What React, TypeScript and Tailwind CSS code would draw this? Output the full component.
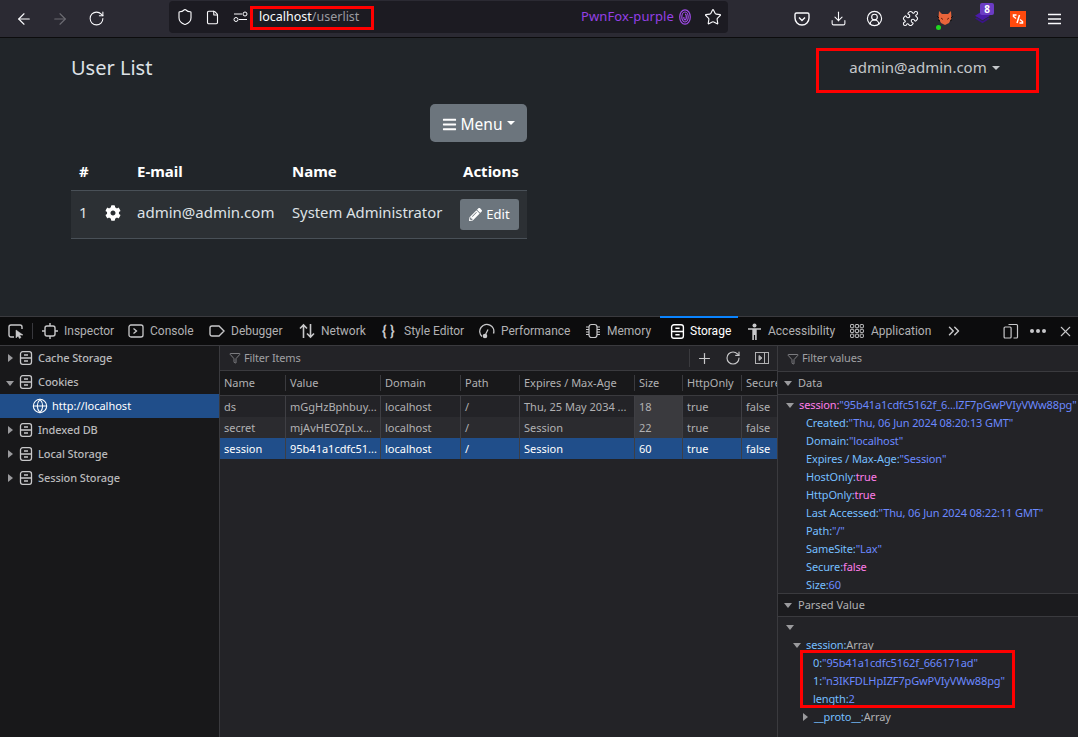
import React from 'react';
import {
  ArrowLeft, ArrowRight, RotateCw, Shield, File, Star, Download, CircleUserRound, Puzzle,
  Plus, X, ChevronsRight, Globe, Filter,
} from 'lucide-react';
import { FaBars, FaCog, FaPencilAlt } from 'react-icons/fa';

const DEVTOOLS_TABS = [
  { label: 'Inspector', w: 'w-[86px]', icon: <InspectorIcon /> },
  { label: 'Console', w: 'w-[81px]', icon: <ConsoleIcon /> },
  { label: 'Debugger', w: 'w-[90px]', icon: <DebuggerIcon /> },
  { label: 'Network', w: 'w-[83px]', icon: <NetworkIcon /> },
  { label: 'Style Editor', w: 'w-[97px]', icon: <span className="w-[16px] text-[14px] leading-none font-bold whitespace-nowrap text-[#c8c8ca]">{'{ }'}</span> },
  { label: 'Performance', w: 'w-[106px]', icon: <PerfIcon /> },
];

const COLS = ['w-[65px]', 'w-[95px]', 'w-[80px]', 'w-[59px]', 'w-[115px]', 'w-[48px]', 'w-[59px]', 'flex-1'];
const HEAD = ['Name', 'Value', 'Domain', 'Path', 'Expires / Max-Age', 'Size', 'HttpOnly', 'Secure'];
const ROWS = [
  { cells: ['ds', 'mGgHzBphbuy...', 'localhost', '/', 'Thu, 25 May 2034 ...', '18', 'true', 'false'], cls: 'bg-[#232327] text-[#b1b1b3]' },
  { cells: ['secret', 'mjAvHEOZpLx...', 'localhost', '/', 'Session', '22', 'true', 'false'], cls: 'bg-[#2b2b2f] text-[#b1b1b3]' },
  { cells: ['session', '95b41a1cdfc51...', 'localhost', '/', 'Session', '60', 'true', 'false'], cls: 'bg-[#204e8a] text-white' },
];

function InspectorIcon() {
  return (
    <svg width="16" height="16" viewBox="0 0 16 16" fill="none" stroke="#c8c8ca" strokeWidth="1.4">
      <rect x="3" y="3" width="10" height="10" rx="2" />
      <path d="M8 0v3M8 13v3M0 8h3M13 8h3" />
    </svg>
  );
}

function ConsoleIcon() {
  return (
    <svg width="16" height="16" viewBox="0 0 16 16" fill="none" stroke="#c8c8ca" strokeWidth="1.3">
      <rect x="1" y="2" width="14" height="12" rx="2" />
      <path d="M5.500 5.500 8.500 8l-3 2.500" />
    </svg>
  );
}

function DebuggerIcon() {
  return (
    <svg width="16" height="16" viewBox="0 0 16 16" fill="none" stroke="#c8c8ca" strokeWidth="1.4">
      <path d="M1 5a2 2 0 0 1 2-2h7l5 5-5 5H3a2 2 0 0 1-2-2z" />
    </svg>
  );
}

function NetworkIcon() {
  return (
    <svg width="16" height="16" viewBox="0 0 16 16" fill="none" stroke="#c8c8ca" strokeWidth="1.6">
      <path d="M4.500 15V2M1 5.500 4.500 2 8 5.500M11.500 1v13M8 10.500l3.500 3.500 3.500-3.500" />
    </svg>
  );
}

function PerfIcon() {
  return (
    <svg width="16" height="16" viewBox="0 0 16 16" fill="none" stroke="#c8c8ca" strokeWidth="1.4">
      <path d="M3 13.500A7 7 0 1 1 14.500 10.500" />
      <path d="M5.500 13.500 9 6.500" strokeWidth="1.2" />
      <circle cx="6" cy="13" r="1.600" fill="#c8c8ca" />
    </svg>
  );
}

function MemoryIcon() {
  return (
    <svg width="16" height="16" viewBox="0 0 16 16" fill="none" stroke="#c8c8ca" strokeWidth="1.2">
      <rect x="4" y="1.500" width="8" height="13" rx="2.500" />
      <path d="M1 4h3M1 6.500h3M1 9h3M1 11.500h3M12 4h3M12 6.500h3M12 9h3M12 11.500h3" />
    </svg>
  );
}

function StorageIcon({ color = '#c8c8ca', size = 14 }: { color?: string; size?: number }) {
  return (
    <svg width={size} height={size} viewBox="0 0 14 14" fill="none" stroke={color} strokeWidth="1.3">
      <rect x="1.500" y="0.700" width="11" height="12.600" rx="2.200" />
      <path d="M1.500 7h11M5 4h4M5 10h4" />
    </svg>
  );
}

function AccessibilityIcon() {
  return (
    <svg width="15" height="17" viewBox="0 0 14 17" fill="#c8c8ca">
      <circle cx="7" cy="2.500" r="2" />
      <path d="M0.500 5.200h13v1.600H9.200V17H7.600v-5H6.400v5H4.800V6.800H0.500z" />
    </svg>
  );
}

function AppIcon() {
  return (
    <svg width="15" height="15" viewBox="0 0 14 14" fill="none" stroke="#c8c8ca" strokeWidth="0.9">
      {[1.5, 6, 10.5].map((y) =>
        [0.5, 5, 9.5].map((x) => <rect key={`${x}-${y}`} x={x} y={y - 1} width="3" height="3" rx="0.5" />),
      )}
    </svg>
  );
}

function FingerprintIcon() {
  return (
    <svg width="12" height="16" viewBox="0 0 12 16" fill="none" stroke="#a04ce8" strokeWidth="1.2" className="ml-[5px]">
      <ellipse cx="6" cy="8" rx="5.300" ry="7.200" />
      <ellipse cx="6" cy="8" rx="3.200" ry="5" />
      <path d="M6 5.200c1.200 0 1.300 1.500 1.300 2.800s-.3 2.800-1.300 2.800S4.800 9 4.800 8" />
    </svg>
  );
}

function FilterField({ label }: { label: string }) {
  return (
    <div className="flex items-center gap-[3px] pl-[9px] text-[11px] tracking-[-0.15px] text-[#a0a0a3]">
      <Filter size={12} strokeWidth={1.5} className="text-[#9a9a9d]" />
      {label}
    </div>
  );
}

function TreeItem({ label, open }: { label: string; open?: boolean }) {
  return (
    <div className="flex h-[24px] items-center text-[11px] font-medium tracking-[-0.1px] text-[#b9b9bb]">
      <div className="flex w-[19px] justify-center pl-[1px]">
        {open ? (
          <div className="mt-[2px] h-0 w-0 border-x-[4px] border-t-[5px] border-x-transparent border-t-[#9a9a9d]" />
        ) : (
          <div className="h-0 w-0 border-y-[4px] border-l-[5px] border-y-transparent border-l-[#9a9a9d]" />
        )}
      </div>
      <StorageIcon />
      <span className="ml-[5px]">{label}</span>
    </div>
  );
}

function Prop({ name, value, pink, indent = 'pl-[28px]', nameCls = 'text-[#75bfff]' }: {
  name: string;
  value: string;
  pink?: boolean;
  indent?: string;
  nameCls?: string;
}) {
  return (
    <div className={`flex h-[18px] items-center whitespace-nowrap ${indent}`}>
      <span className={nameCls}>{name}:</span>
      <span className={pink ? 'text-[#ff7de9]' : 'text-[#6b89ff]'}>{value}</span>
    </div>
  );
}

function SectionHeader({ label }: { label: string }) {
  return (
    <div className="flex h-[24px] items-center border-y border-[#3a3a3e] bg-[#1b1b1e] text-[11px] text-[#b1b1b3]">
      <div className="mx-[6px] h-0 w-0 border-x-[4px] border-t-[5px] border-x-transparent border-t-[#9a9a9d]" />
      {label}
    </div>
  );
}

function BrowserBar() {
  return (
    <div className="flex h-[38px] items-start border-b border-[#0c0c0d] bg-[#2b2a33] text-[#fbfbfe]">
      <div className="flex h-[37px] w-[164px] items-center gap-[18px] pl-[15px]">
        <ArrowLeft size={18} strokeWidth={1.5} />
        <ArrowRight size={18} strokeWidth={1.5} className="text-[#6c6b72]" />
        <RotateCw size={17} strokeWidth={1.5} className="ml-[1px]" />
      </div>
      <div className="relative mt-[1px] ml-[5px] flex h-[32px] w-[559px] items-center rounded-[4px] bg-[#1c1b22] pl-[7px]">
        <Shield size={18} strokeWidth={1.5} />
        <File size={15} strokeWidth={1.8} className="ml-[11px]" />
        <svg width="15" height="12" viewBox="0 0 15 12" fill="none" stroke="#fbfbfe" strokeWidth="1" className="ml-[13px]">
          <circle cx="12" cy="3" r="2" />
          <circle cx="3" cy="8.500" r="2" />
          <path d="M1 3h8M6 8.500h8" />
        </svg>
        <span className="ml-[11px] text-[12.5px]">localhost<span className="text-[#9a9aa0]">/userlist</span></span>
        <span className="ml-auto text-[13px] tracking-[0.1px] text-[#9540e6]">PwnFox-purple</span>
        <FingerprintIcon />
        <Star size={18} strokeWidth={1.5} className="mr-[6px] ml-[13px]" />
      </div>
      <div className="flex h-[37px] flex-1 items-center pl-[66px]">
        <svg width="16" height="16" viewBox="0 0 16 16" fill="none" stroke="#fbfbfe" strokeWidth="1.4">
          <path d="M2.500 2h11A1.500 1.500 0 0 1 15 3.500V7a7 7 0 0 1-14 0V3.500A1.500 1.500 0 0 1 2.500 2z" />
          <path d="m5 6.500 3 3 3-3" />
        </svg>
        <Download size={17} strokeWidth={1.5} className="ml-[20px]" />
        <CircleUserRound size={17} strokeWidth={1.6} className="ml-[19px]" />
        <Puzzle size={17} strokeWidth={1.5} className="ml-[19px]" />
        <div className="relative ml-[18px] h-[16px] w-[16px]">
          <svg width="16" height="16" viewBox="0 0 16 16">
            <path d="M2 0l3 3h6l3-3 .5 7L12 12l-4 2-4-2-2.500-5z" fill="#e8643a" />
            <path d="M0 5l2 2M16 5l-2 2M1 9l2 1M15 9l-2 1" stroke="#111" strokeWidth="1" />
            <path d="M4 7l2 1.500M12 7l-2 1.500" stroke="#6b2510" strokeWidth="1" />
          </svg>
          <div className="absolute bottom-[-3px] left-[-1px] h-[5px] w-[5px] rounded-full bg-[#1fd61f]" />
        </div>
        <div className="relative ml-[21px] h-[18px] w-[18px]">
          <svg width="17" height="15" viewBox="0 0 18 16">
            <path d="M9 1 17 6l-8 5-8-5z" fill="#4a1aa8" />
            <path d="m1 9 8 5 8-5-2-1-6 4-6-4z" fill="#3a1488" />
          </svg>
          <div className="absolute top-[-7px] left-[6px] w-[14px] rounded-[2px] bg-[#6b3cc4] text-center text-[10px] leading-[12px] font-bold text-white">8</div>
        </div>
        <svg width="16" height="16" viewBox="0 0 16 16" className="ml-[18px]" fill="none" stroke="#fff" strokeWidth="1.5">
          <rect width="16" height="16" fill="#ff4a0d" stroke="none" />
          <path d="M6.500 4H3.500v1.500L6 7.500M9.500 4 7 12M9.500 12h3v-1.500L10 8.500" />
        </svg>
        <svg width="13" height="12" viewBox="0 0 13 12" stroke="#fbfbfe" strokeWidth="1.3" className="ml-[22px]">
          <path d="M0 1.500h13M0 6h13M0 10.500h13" />
        </svg>
      </div>
    </div>
  );
}

function PageContent() {
  return (
    <div className="relative h-[278px] bg-[#212529] pl-[71px] text-[#dee2e6]">
      <div className="pt-[17px] text-[20px] leading-[26px]">User List</div>
      <div className="absolute top-[10px] left-[816px] flex h-[45px] w-[223px] items-center justify-center border-[3px] border-[#f00] pr-[6px] pb-[6px] text-[15px] text-[#c5c8cb]">
        admin@admin.com
        <span className="mt-[1px] ml-[5px] h-0 w-0 border-x-[4px] border-t-[4px] border-x-transparent border-t-[#c5c8cb]" />
      </div>
      <div className="w-[456px]">
        <div className="mt-[23px] flex justify-end">
          <div className="flex h-[38px] w-[97px] items-center justify-center rounded-[5px] bg-[#6c757d] pt-[3px] text-[15.5px] text-white">
            <FaBars size={15} className="mr-[4px]" />
            Menu
            <span className="mb-[3px] ml-[5px] h-0 w-0 border-x-[4.500px] border-t-[4.500px] border-x-transparent border-t-white" />
          </div>
        </div>
        <div className="mt-[10px] flex h-[39px] items-center border-b border-[#495057] text-[15px] font-bold text-white">
          <div className="w-[66px] pl-[8px]">#</div>
          <div className="w-[155px]">E-mail</div>
          <div className="w-[171px]">Name</div>
          <div>Actions</div>
        </div>
        <div className="flex h-[48px] items-center border-b border-[#495057] bg-[#2c3034] text-[15px]">
          <div className="w-[34px] pb-[4px] pl-[8px]">1</div>
          <div className="w-[32px] pb-[4px]"><FaCog size={16} className="text-white" /></div>
          <div className="w-[155px] pb-[4px]">admin@admin.com</div>
          <div className="w-[169px] pb-[4px] text-[14.8px] whitespace-nowrap">System Administrator</div>
          <div className="-ml-[1px] flex h-[31px] w-[59px] items-center justify-center rounded-[3px] bg-[#6c757d] text-[13px] text-white">
            <FaPencilAlt size={13} className="mr-[4px]" />
            Edit
          </div>
        </div>
      </div>
    </div>
  );
}

function DevToolsTabs() {
  return (
    <div className="flex h-[29px] items-center border-t border-[#3a3a3e] bg-[#0c0c0d] font-['Roboto',sans-serif] text-[12px] text-[#b1b1b3]">
      <div className="flex w-[33px] items-center justify-center border-r border-[#38383d] pl-[1px]">
        <svg width="17" height="16" viewBox="0 0 17 16" fill="none" stroke="#c8c8ca" strokeWidth="1.4">
          <path d="M6 14H3a2 2 0 0 1-2-2V4a2 2 0 0 1 2-2h9a2 2 0 0 1 2 2v2" />
          <path d="M8 7v8l2-2 1.500 2.500 1.500-1-1.500-2.500H15z" fill="#c8c8ca" strokeWidth="0.5" />
        </svg>
      </div>
      <div className="ml-[9px] flex items-center">
        {DEVTOOLS_TABS.map((tab) => (
          <div key={tab.label} className={`flex items-center gap-[6px] whitespace-nowrap ${tab.w}`}>
            {tab.icon}
            {tab.label}
          </div>
        ))}
        <div className="flex w-[75px] items-center gap-[6px]"><MemoryIcon />Memory</div>
      </div>
      <div className="relative flex h-full w-[78px] items-center gap-[5px] pl-[10px] text-white">
        <div className="absolute top-[-1px] left-0 h-[2px] w-full bg-[#0a84ff]" />
        <StorageIcon color="#ffffff" size={15} />
        Storage
      </div>
      <div className="flex w-[103px] items-center gap-[6px] pl-[9px]"><AccessibilityIcon />Accessibility</div>
      <div className="flex w-[106px] items-center gap-[6px] pl-[9px]"><AppIcon />Application</div>
      <ChevronsRight size={18} strokeWidth={2} className="-ml-[2px] text-[#c8c8ca]" />
      <div className="ml-auto flex items-center gap-[11px] pr-[4px] text-[#c8c8ca]">
        <svg width="16" height="16" viewBox="0 0 15 16" fill="none" stroke="#c8c8ca" strokeWidth="1.200">
          <rect x="0.600" y="4" width="7" height="11" rx="1" />
          <path d="M5 1.500h8a1 1 0 0 1 1 1V14a1 1 0 0 1-1 1h-3" />
        </svg>
        <div className="flex gap-[2px]">
          <div className="h-[4px] w-[4px] rounded-full bg-[#c8c8ca]" />
          <div className="h-[4px] w-[4px] rounded-full bg-[#c8c8ca]" />
          <div className="h-[4px] w-[4px] rounded-full bg-[#c8c8ca]" />
        </div>
        <X size={17} strokeWidth={1.5} />
      </div>
    </div>
  );
}

function Sidebar() {
  return (
    <div className="h-full w-[220px] shrink-0 border-r border-[#3a3a3e] bg-[#18181a]">
      <TreeItem label="Cache Storage" />
      <TreeItem label="Cookies" open />
      <div className="flex h-[24px] items-center bg-[#204e8a] pl-[32px] text-[11px] text-white">
        <Globe size={16} strokeWidth={1.6} />
        <span className="ml-[4px]">http://localhost</span>
      </div>
      <TreeItem label="Indexed DB" />
      <TreeItem label="Local Storage" />
      <TreeItem label="Session Storage" />
    </div>
  );
}

function CookieTable() {
  return (
    <div className="flex h-full w-[558px] shrink-0 flex-col border-r border-[#3a3a3e] bg-[#232327]">
      <div className="flex h-[25px] items-center border-b border-[#3a3a3e]">
        <FilterField label="Filter Items" />
        <div className="ml-auto flex h-[18px] w-[88px] items-center border-l border-[#3a3a3e] pl-[6px] text-[#c8c8ca]">
          <Plus size={17} strokeWidth={1.7} />
          <RotateCw size={16} strokeWidth={1.7} className="ml-[12px]" />
          <svg width="14" height="12" viewBox="0 0 14 12" fill="none" stroke="#b1b1b3" className="ml-[14px]">
            <rect x="0.500" y="0.500" width="13" height="11" />
            <path d="M9.500 1v10" />
            <path d="m4 3.500 3 2.500-3 2.500z" fill="#b1b1b3" />
          </svg>
        </div>
      </div>
      <div className="flex h-[25px] items-center border-b border-[#3a3a3e] bg-[#18181a] text-[11px] text-[#b1b1b3]">
        {HEAD.map((h, i) => (
          <div key={h} className={`overflow-hidden border-l border-[#3a3a3e] pl-[4px] whitespace-nowrap first:border-l-0 ${COLS[i]}`}>{h}</div>
        ))}
      </div>
      {ROWS.map((row) => (
        <div key={row.cells[0]} className={`flex h-[21px] items-center text-[11px] ${row.cls}`}>
          {row.cells.map((c, i) => (
            <div
              key={i}
              className={`flex h-full items-center overflow-hidden border-l border-[#3f3f44] pt-[1px] pl-[4px] whitespace-nowrap first:border-l-0 ${COLS[i]} ${i === 5 && row.cells[0] !== 'session' ? 'bg-[#3a3a3e]' : ''}`}
            >
              {c}
            </div>
          ))}
        </div>
      ))}
    </div>
  );
}

function DetailsPanel() {
  return (
    <div className="h-full min-w-0 flex-1 overflow-hidden bg-[#232327]">
      <div className="flex h-[25px] items-center"><FilterField label="Filter values" /></div>
      <SectionHeader label="Data" />
      <div className="h-[198px] overflow-hidden pt-[1px] text-[11px] tracking-[-0.12px]">
        <div className="flex h-[18px] items-center whitespace-nowrap">
          <div className="mr-[5px] ml-[8px] h-0 w-0 border-x-[4px] border-t-[5px] border-x-transparent border-t-[#9a9a9d]" />
          <span className="text-[#ff7de9]">session:</span>
          <span className="text-[#6b89ff]">"95b41a1cdfc5162f_6...lZF7pGwPVIyVWw88pg"</span>
        </div>
        <Prop name="Created" value={'"Thu, 06 Jun 2024 08:20:13 GMT"'} />
        <Prop name="Domain" value={'"localhost"'} />
        <Prop name="Expires / Max-Age" value={'"Session"'} />
        <Prop name="HostOnly" value="true" pink />
        <Prop name="HttpOnly" value="true" pink />
        <Prop name="Last Accessed" value={'"Thu, 06 Jun 2024 08:22:11 GMT"'} />
        <Prop name="Path" value={'"/"'} />
        <Prop name="SameSite" value={'"Lax"'} />
        <Prop name="Secure" value="false" pink />
        <Prop name="Size" value="60" />
      </div>
      <SectionHeader label="Parsed Value" />
      <div className="relative pt-[1px] text-[11px] tracking-[-0.12px]">
        <div className="flex h-[18px] items-center pl-[8px]">
          <div className="h-0 w-0 border-x-[4px] border-t-[5px] border-x-transparent border-t-[#9a9a9d]" />
        </div>
        <div className="flex h-[18px] items-center">
          <div className="mr-[5px] ml-[15px] h-0 w-0 border-x-[4px] border-t-[5px] border-x-transparent border-t-[#9a9a9d]" />
          <span className="text-[#75bfff]">session:</span>
          <span className="text-[#b1b1b3]">Array</span>
        </div>
        <Prop indent="pl-[35px]" name="0" value={'"95b41a1cdfc5162f_666171ad"'} />
        <Prop indent="pl-[35px]" name="1" value={'"n3IKFDLHpIZF7pGwPVIyVWw88pg"'} />
        <Prop indent="pl-[35px]" name="length" value="2" />
        <div className="flex h-[18px] items-center">
          <div className="mr-[6px] ml-[25px] h-0 w-0 border-y-[4px] border-l-[5px] border-y-transparent border-l-[#9a9a9d]" />
          <span className="text-[#75bfff]">__proto__:</span>
          <span className="text-[#b1b1b3]">Array</span>
        </div>
        <div className="absolute top-[33px] left-[22px] h-[58px] w-[215px] border-[3px] border-[#f00]" />
      </div>
    </div>
  );
}

export default function App() {
  return (
    <div className="relative h-[737px] w-[1078px] overflow-hidden bg-[#232327] font-['Noto_Sans',sans-serif]">
      <BrowserBar />
      <PageContent />
      <DevToolsTabs />
      <div className="flex h-[392px] border-t border-[#3a3a3e]">
        <Sidebar />
        <CookieTable />
        <DetailsPanel />
      </div>
      <div className="absolute top-[6px] left-[250px] h-[24px] w-[124px] border-[3px] border-[#f00]" />
    </div>
  );
}
